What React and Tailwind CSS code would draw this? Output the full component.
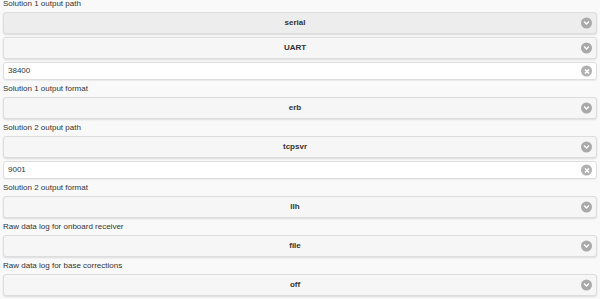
import { useState } from "react";

const ChevronIcon = () => (
  <span className="flex h-[11px] w-[11px] items-center justify-center rounded-full bg-[#a9a9a9]">
    <svg width="7" height="7" viewBox="0 0 14 14">
      <path d="M3 5 L7 9 L11 5" fill="none" stroke="#fff" strokeWidth="2.6" strokeLinecap="square" />
    </svg>
  </span>
);

const ClearIcon = () => (
  <span className="flex h-[11px] w-[11px] items-center justify-center rounded-full bg-[#b0b0b0]">
    <svg width="8" height="8" viewBox="0 0 14 14">
      <path d="M3.5 3.5 L10.5 10.5 M10.5 3.5 L3.5 10.5" fill="none" stroke="#fff" strokeWidth="2.8" />
    </svg>
  </span>
);

const Label = ({ children, first }) => (
  <div
    className={
      first
        ? "h-[12px] text-[8px] leading-[8px] text-[#333]"
        : "mt-[3px] h-[14px] text-[8px] leading-[12px] text-[#333]"
    }
  >
    {children}
  </div>
);

const Select = ({ value, active, last }) => (
  <div
    className={
      "relative flex h-[22px] items-center justify-center rounded-[3px] border border-[#dddddd] pr-[10px] text-[8px] font-bold text-[#333] shadow-[0_1px_2px_rgba(0,0,0,0.12)] " +
      (active ? "bg-[#ededed] " : "bg-[#f6f6f6] ") +
      (last ? "" : "mb-[3px]")
    }
  >
    {value}
    <span className="absolute right-[4px] top-1/2 -translate-y-1/2">
      <ChevronIcon />
    </span>
  </div>
);

const TextInput = ({ value, onChange }) => (
  <div className="relative flex h-[18px] items-center rounded-[3px] border border-[#dddddd] bg-white px-[4px] shadow-[0_1px_1px_rgba(0,0,0,0.06)]">
    <input
      type="text"
      className="w-full bg-transparent text-[8px] text-[#333] outline-none"
      value={value}
      onChange={(e) => onChange(e.target.value)}
    />
    <button onClick={() => onChange("")} className="absolute right-[4px] top-1/2 -translate-y-1/2">
      <ClearIcon />
    </button>
  </div>
);

export default function App() {
  const [baud, setBaud] = useState("38400");
  const [port, setPort] = useState("9001");

  return (
    <div
      className="h-[299px] w-[600px] overflow-hidden bg-[#f9f9f9] px-[3px]"
      style={{ fontFamily: '"Liberation Sans", Arial, sans-serif' }}
    >
      <Label first>Solution 1 output path</Label>
      <Select value="serial" active />
      <Select value="UART" />
      <TextInput value={baud} onChange={setBaud} />

      <Label>Solution 1 output format</Label>
      <Select value="erb" last />

      <Label>Solution 2 output path</Label>
      <Select value="tcpsvr" />
      <TextInput value={port} onChange={setPort} />

      <Label>Solution 2 output format</Label>
      <Select value="llh" last />

      <Label>Raw data log for onboard receiver</Label>
      <Select value="file" last />

      <Label>Raw data log for base corrections</Label>
      <Select value="off" last />
    </div>
  );
}
